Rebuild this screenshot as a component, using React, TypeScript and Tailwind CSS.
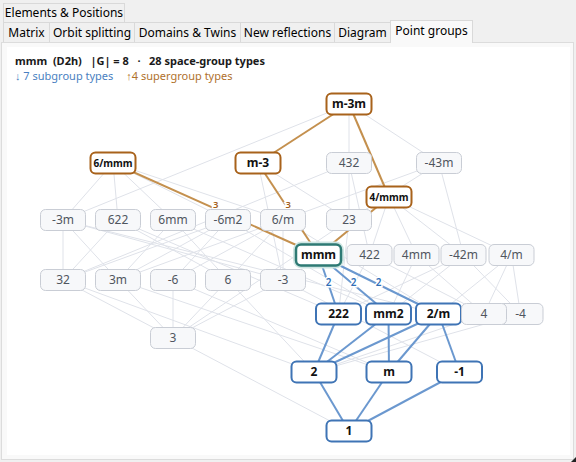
import React from "react";

type Kind = "plain" | "super" | "sub" | "self";
type Node = { id: string; x: number; y: number; kind: Kind };
type EdgeKind = "gray" | "brown" | "blue";
type Edge = { a: string; b: string; kind: EdgeKind; label?: string };

const NODES: Node[] = [
  { id: "m-3m", x: 349, y: 104, kind: "super" },
  { id: "6/mmm", x: 113, y: 163, kind: "super" },
  { id: "m-3", x: 258, y: 163, kind: "super" },
  { id: "432", x: 349, y: 163, kind: "plain" },
  { id: "-43m", x: 439, y: 163, kind: "plain" },
  { id: "4/mmm", x: 389, y: 197, kind: "super" },
  { id: "-3m", x: 63, y: 220, kind: "plain" },
  { id: "622", x: 118, y: 220, kind: "plain" },
  { id: "6mm", x: 173, y: 220, kind: "plain" },
  { id: "-6m2", x: 228, y: 220, kind: "plain" },
  { id: "6/m", x: 283, y: 220, kind: "plain" },
  { id: "23", x: 349, y: 220, kind: "plain" },
  { id: "422", x: 369.5, y: 255, kind: "plain" },
  { id: "4mm", x: 416.5, y: 255, kind: "plain" },
  { id: "-42m", x: 463.5, y: 255, kind: "plain" },
  { id: "4/m", x: 511.5, y: 255, kind: "plain" },
  { id: "32", x: 63, y: 280, kind: "plain" },
  { id: "3m", x: 118, y: 280, kind: "plain" },
  { id: "-6", x: 173, y: 280, kind: "plain" },
  { id: "6", x: 228, y: 280, kind: "plain" },
  { id: "-3", x: 283, y: 280, kind: "plain" },
  { id: "mmm", x: 318.5, y: 255, kind: "self" },
  { id: "222", x: 338.5, y: 314, kind: "sub" },
  { id: "mm2", x: 388.5, y: 314, kind: "sub" },
  { id: "2/m", x: 438.5, y: 314, kind: "sub" },
  { id: "-4", x: 520.5, y: 314, kind: "plain" },
  { id: "4", x: 484, y: 314, kind: "plain" },
  { id: "3", x: 173, y: 338, kind: "plain" },
  { id: "2", x: 314, y: 372, kind: "sub" },
  { id: "m", x: 389, y: 372, kind: "sub" },
  { id: "-1", x: 459.5, y: 372, kind: "sub" },
  { id: "1", x: 349, y: 431, kind: "sub" },
];

const g = (a: string, b: string): Edge => ({ a, b, kind: "gray" });

const EDGES: Edge[] = [
  g("m-3m", "432"), g("m-3m", "-43m"), g("m-3m", "-3m"),
  g("432", "23"), g("432", "422"), g("432", "32"),
  g("-43m", "23"), g("-43m", "-42m"), g("-43m", "3m"),
  g("m-3", "23"), g("m-3", "-3"),
  g("4/mmm", "422"), g("4/mmm", "4mm"), g("4/mmm", "-42m"), g("4/mmm", "4/m"),
  g("6/mmm", "622"), g("6/mmm", "6mm"), g("6/mmm", "-6m2"), g("6/mmm", "6/m"), g("6/mmm", "-3m"),
  g("23", "222"), g("23", "3"),
  g("622", "6"), g("622", "32"), g("622", "222"),
  g("6mm", "6"), g("6mm", "3m"), g("6mm", "mm2"),
  g("-6m2", "-6"), g("-6m2", "3m"), g("-6m2", "32"), g("-6m2", "mm2"),
  g("6/m", "6"), g("6/m", "-6"), g("6/m", "-3"), g("6/m", "2/m"),
  g("-3m", "32"), g("-3m", "3m"), g("-3m", "-3"), g("-3m", "2/m"),
  g("422", "4"), g("422", "222"),
  g("4mm", "4"), g("4mm", "mm2"),
  g("-42m", "-4"), g("-42m", "222"), g("-42m", "mm2"),
  g("4/m", "4"), g("4/m", "-4"), g("4/m", "2/m"),
  g("32", "3"), g("32", "2"),
  g("3m", "3"), g("3m", "m"),
  g("-6", "3"), g("-6", "m"),
  g("6", "3"), g("6", "2"),
  g("-3", "3"), g("-3", "-1"),
  g("4", "2"), g("-4", "2"),
  g("3", "1"),
  { a: "m-3m", b: "m-3", kind: "brown" },
  { a: "m-3m", b: "4/mmm", kind: "brown" },
  { a: "6/mmm", b: "mmm", kind: "brown", label: "3" },
  { a: "m-3", b: "mmm", kind: "brown", label: "3" },
  { a: "4/mmm", b: "mmm", kind: "brown" },
  { a: "mmm", b: "222", kind: "blue", label: "2" },
  { a: "mmm", b: "mm2", kind: "blue", label: "2" },
  { a: "mmm", b: "2/m", kind: "blue", label: "2" },
  { a: "222", b: "2", kind: "blue" },
  { a: "mm2", b: "2", kind: "blue" },
  { a: "mm2", b: "m", kind: "blue" },
  { a: "2/m", b: "2", kind: "blue" },
  { a: "2/m", b: "m", kind: "blue" },
  { a: "2/m", b: "-1", kind: "blue" },
  { a: "2", b: "1", kind: "blue" },
  { a: "m", b: "1", kind: "blue" },
  { a: "-1", b: "1", kind: "blue" },
];

const byId: Record<string, Node> = Object.fromEntries(NODES.map((n) => [n.id, n]));

const W = 45;
const H = 21;
const FONT = '"Segoe UI", "Noto Sans", "Open Sans", sans-serif';

const EDGE_STYLE: Record<EdgeKind, { stroke: string; width: number }> = {
  gray: { stroke: "#dfe2e9", width: 1 },
  brown: { stroke: "#c4904e", width: 2 },
  blue: { stroke: "#6b98cf", width: 2 },
};

function NodeBox({ n }: { n: Node }) {
  const x = n.x - W / 2;
  const y = n.y - H / 2;
  const long = n.id.length >= 5;
  if (n.kind === "plain") {
    return (
      <g>
        <rect x={x} y={y} width={W} height={H} rx={5} fill="#f7f8fa" stroke="#c9cdd5" strokeWidth={1} />
        <text x={n.x} y={n.y + 4.2} textAnchor="middle" fontSize={12} fill="#50565f" fontFamily={FONT}>
          {n.id}
        </text>
      </g>
    );
  }
  const stroke = n.kind === "super" ? "#a8621b" : n.kind === "sub" ? "#3f74b5" : "#2e7a74";
  return (
    <g>
      {n.kind === "self" && (
        <rect x={x - 1.5} y={y - 1.5} width={W + 3} height={H + 3} rx={7} fill="none" stroke="#cfe6e3" strokeWidth={3} />
      )}
      <rect x={x} y={y} width={W} height={H} rx={5} fill="#ffffff" stroke={stroke} strokeWidth={n.kind === "self" ? 2.5 : 2} />
      <text
        x={n.x}
        y={n.y + (long ? 3.6 : 4.2)}
        textAnchor="middle"
        fontSize={long ? 10 : 12}
        fontWeight={700}
        fill="#111111"
        fontFamily={FONT}
      >
        {n.id}
      </text>
    </g>
  );
}

function Diagram() {
  return (
    <svg className="absolute left-0 top-0" width={562} height={407} viewBox="7 47 562 407">
      {EDGES.filter((e) => e.kind === "gray").map((e, i) => {
        const a = byId[e.a];
        const b = byId[e.b];
        const s = EDGE_STYLE[e.kind];
        return <line key={`g${i}`} x1={a.x} y1={a.y} x2={b.x} y2={b.y} stroke={s.stroke} strokeWidth={s.width} />;
      })}
      {EDGES.filter((e) => e.kind !== "gray").map((e, i) => {
        const a = byId[e.a];
        const b = byId[e.b];
        const s = EDGE_STYLE[e.kind];
        return <line key={`c${i}`} x1={a.x} y1={a.y} x2={b.x} y2={b.y} stroke={s.stroke} strokeWidth={s.width} />;
      })}
      {/* index labels sit near each edge's midpoint; node boxes are painted over them */}
      {EDGES.filter((e) => e.label).map((e, i) => {
        const a = byId[e.a];
        const b = byId[e.b];
        const mx = (a.x + b.x) / 2;
        const my = (a.y + b.y) / 2;
        const brown = e.kind === "brown";
        return (
          <text
            key={`l${i}`}
            x={mx}
            y={brown ? my - 1.5 : my + 1}
            textAnchor="middle"
            fontSize={brown ? 9.5 : 10}
            fontWeight={600}
            fill={brown ? "#a45f1b" : "#2f6fb8"}
            stroke="#ffffff"
            strokeWidth={3}
            paintOrder="stroke"
            fontFamily={FONT}
          >
            {e.label}
          </text>
        );
      })}
      {NODES.map((n) => (
        <NodeBox key={n.id} n={n} />
      ))}
    </svg>
  );
}

const TABS: { label: string; w: number }[] = [
  { label: "Matrix", w: 46 },
  { label: "Orbit splitting", w: 85 },
  { label: "Domains & Twins", w: 106 },
  { label: "New reflections", w: 94 },
  { label: "Diagram", w: 56 },
];

export default function App() {
  return (
    <div
      className="relative w-[576px] h-[462px] overflow-hidden bg-[#f0f0f0] text-black"
      style={{ fontFamily: FONT }}
    >
      {/* first tab row */}
      <div className="flex pl-[3px] pt-[3px]">
        <div className="h-[19px] w-[122px] border border-b-0 border-[#d9d9d9] bg-[#f0f0f0] text-[12px] leading-[18px] text-center">
          Elements &amp; Positions
        </div>
      </div>
      {/* second tab row */}
      <div className="flex pl-[3px] h-[20px] items-end relative z-10">
        {TABS.map((t) => (
          <div
            key={t.label}
            className="h-[20px] border border-b-0 border-r-0 border-[#d9d9d9] bg-[#f0f0f0] text-[12px] leading-[19px] text-center whitespace-nowrap"
            style={{ width: t.w }}
          >
            {t.label}
          </div>
        ))}
        <div className="h-[23px] w-[83px] -mb-[1px] border border-b-0 border-[#d9d9d9] bg-[#f9f9f9] text-[12px] leading-[20px] text-center whitespace-nowrap">
          Point groups
        </div>
      </div>
      {/* tab page */}
      <div className="ml-[1px] mr-[2px] h-[418px] border border-[#dcdcdc] bg-[#f9f9f9] p-[4px] pl-[5px] pr-[3px]">
        <div className="relative h-full bg-white">
          <Diagram />
          <div className="relative pl-[8px] pt-[6px]">
            <div className="whitespace-pre text-[11px] font-bold leading-[15px] text-[#1a1a1a]">
              mmm  (D2h)   |G| = 8   ·   28 space-group types
            </div>
            <div className="flex gap-[13px] text-[11px] leading-[15px]">
              <span className="text-[#4a7fc1]">↓ 7 subgroup types</span>
              <span className="text-[#b0712c]">↑4 supergroup types</span>
            </div>
          </div>
        </div>
      </div>
      {/* size grip */}
      <svg className="absolute right-0 bottom-0" width={5} height={5} viewBox="0 0 5 5">
        <polygon points="5,0 5,5 0,5" fill="#222222" />
      </svg>
    </div>
  );
}
